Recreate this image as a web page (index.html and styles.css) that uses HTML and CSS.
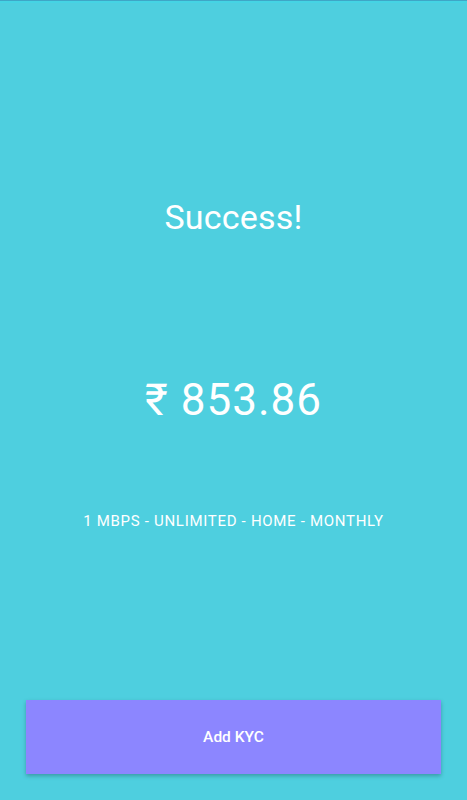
FILE: index.html
```html
<!DOCTYPE html>
<html lang="en">
<head>
<meta charset="utf-8">
<title>Success</title>
<link rel="stylesheet" href="styles.css">
</head>
<body>
<div class="screen">
  <div class="topbar"></div>
  <h1 class="title">Success!</h1>
  <div class="amount">₹ 853.86</div>
  <div class="plan">1 MBPS - UNLIMITED - HOME - MONTHLY</div>
  <button class="cta" type="button">Add KYC</button>
</div>
</body>
</html>
```
FILE: styles.css
```css
html, body {
  margin: 0;
  padding: 0;
}
body {
  background: #4ecfdf;
  font-family: Roboto, "Noto Sans", "DejaVu Sans", sans-serif;
  color: #ffffff;
}
.screen {
  width: 467px;
  height: 800px;
  display: flex;
  flex-direction: column;
  align-items: center;
  box-sizing: border-box;
  background: #4ecfdf;
  overflow: hidden;
}
.topbar {
  align-self: stretch;
  height: 1px;
  background: #3fa6c6;
  border-bottom: 2px solid #45d4e4;
}
.title {
  margin: 194px 0 0;
  font-size: 34px;
  font-weight: 400;
  line-height: 40px;
  letter-spacing: 0.2px;
}
.amount {
  margin-top: 137px;
  font-size: 44px;
  font-weight: 400;
  line-height: 52px;
  letter-spacing: 1px;
}
.plan {
  margin-top: 86px;
  font-size: 15px;
  line-height: 18px;
  letter-spacing: 0.7px;
}
.cta {
  align-self: stretch;
  margin: 170px 26px 0;
  height: 74px;
  border: none;
  border-radius: 0;
  background: #8c86ff;
  color: #ffffff;
  font-family: Roboto, "Noto Sans", sans-serif;
  font-size: 15.5px;
  font-weight: 500;
  box-shadow: 0 2px 4px rgba(0, 0, 0, 0.25);
}
```
